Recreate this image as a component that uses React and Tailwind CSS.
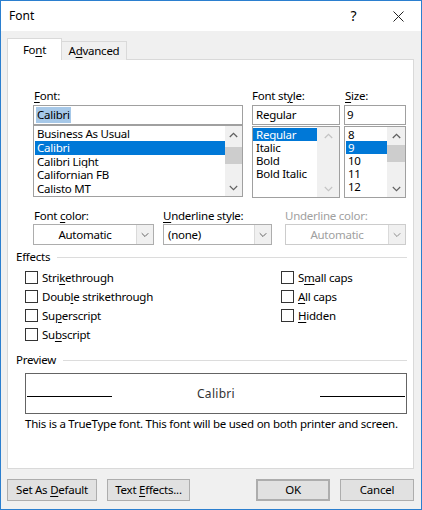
import React from 'react';

const K = ({ children }) => (
  <span className="underline decoration-1 underline-offset-[2px]">{children}</span>
);

const ChevUp = ({ color = '#606060' }) => (
  <svg width="9" height="6" viewBox="0 0 9 6">
    <path d="M0.8 5 L4.5 1.3 L8.2 5" fill="none" stroke={color} strokeWidth="1.3" />
  </svg>
);

const ChevDown = ({ color = '#606060', w = 9 }) => (
  <svg width={w} height="6" viewBox="0 0 9 6">
    <path d="M0.8 1 L4.5 4.7 L8.2 1" fill="none" stroke={color} strokeWidth="1.1" />
  </svg>
);

function ScrollBar({ className, thumbClass, disabled }) {
  const c = disabled ? '#c4c4c4' : '#606060';
  return (
    <div className={`flex flex-col shrink-0 bg-[#f0f0f0] ${className}`}>
      <div className="h-[17px] flex items-center justify-center">
        <ChevUp color={c} />
      </div>
      <div className="flex-1">
        {thumbClass && <div className={`bg-[#cdcdcd] h-[17px] ${thumbClass}`} />}
      </div>
      <div className="h-[17px] flex items-center justify-center">
        <ChevDown color={c} />
      </div>
    </div>
  );
}

function ListBox({ className, items, selected, rowClass, bandClass, scrollClass, thumbClass, disabled }) {
  return (
    <div className={`flex h-[72px] border border-[#a0a0a0] bg-white overflow-hidden ${className}`}>
      <div className={`flex flex-col pt-[1px] ${bandClass}`}>
        {items.map((it) => (
          <div
            key={it}
            className={`${rowClass} flex items-center whitespace-nowrap overflow-hidden ${
              it === selected ? 'bg-[#0078d7] text-white' : ''
            }`}
          >
            <span>{it}</span>
          </div>
        ))}
      </div>
      <ScrollBar className={scrollClass} thumbClass={thumbClass} disabled={disabled} />
    </div>
  );
}

function Combo({ className, text, left, disabled }) {
  return (
    <div
      className={`flex h-[21px] border bg-white ${
        disabled ? 'border-[#cccccc] text-[#a0a0a0]' : 'border-[#adadad]'
      } ${className}`}
    >
      <div className={`flex-1 flex items-center ${left ? 'pl-[4px]' : 'justify-center'}`}>
        <span>{text}</span>
      </div>
      <div className="w-[17px] flex items-center justify-center bg-[#f0f0f0] border-l border-[#dadada]">
        <ChevDown color={disabled ? '#8a8a8a' : '#606060'} w={8} />
      </div>
    </div>
  );
}

function Check({ children }) {
  return (
    <div className="flex items-center h-[19px]">
      <div className="w-[13px] h-[13px] border border-[#333333] bg-white" />
      <span className="ml-[4px]">{children}</span>
    </div>
  );
}

function Button({ className, children }) {
  return (
    <div
      className={`h-[22px] flex items-center justify-center bg-[#e1e1e1] border border-[#adadad] ${className}`}
    >
      <span>{children}</span>
    </div>
  );
}

export default function App() {
  return (
    <div className="w-[422px] h-[510px] bg-[#f0f0f0] border border-[#2b7fcf] flex flex-col text-[11.5px] tracking-[-0.25px] leading-[16px] text-black font-['Segoe_UI','Noto_Sans',sans-serif]">
      {/* title bar */}
      <div className="h-[30px] bg-white flex items-center shrink-0 text-[12px] tracking-normal">
        <span className="flex-1 pl-[8px]">Font</span>
        <div className="w-[46px] h-full flex items-center justify-center pl-[3px] text-[14px]">?</div>
        <div className="w-[46px] h-full flex items-center justify-center">
          <svg width="11" height="11" viewBox="0 0 11 11">
            <path d="M0.5 0.5 L10.5 10.5 M10.5 0.5 L0.5 10.5" stroke="#222" strokeWidth="1" />
          </svg>
        </div>
      </div>

      <div className="flex-1 flex flex-col pl-[6px] pr-[7px] pt-[7px]">
        {/* tabs */}
        <div className="flex items-end h-[22px] relative z-10 -mb-px">
          <div className="w-[55px] h-[22px] bg-white border border-b-0 border-[#d9d9d9] flex items-center justify-center">
            <span>Fo<K>n</K>t</span>
          </div>
          <div className="w-[65px] h-[19px] bg-[#f0f0f0] border border-l-0 border-b-0 border-[#d9d9d9] flex items-center justify-center">
            <span>A<K>d</K>vanced</span>
          </div>
        </div>

        {/* panel */}
        <div className="h-[410px] bg-white border border-[#d9d9d9] pr-[6px] pt-[28px] flex flex-col">
          {/* row 1 */}
          <div className="flex pl-[25px]">
            <div className="flex flex-col w-[210px]">
              <div className="h-[16px] pl-[1px]"><K>F</K>ont:</div>
              <div className="mt-[1px] h-[20px] border border-[#a0a0a0] flex items-center pl-[2px]">
                <span className="bg-[#a6c8e8] px-[1px]">Calibri</span>
              </div>
              <ListBox
                items={['Business As Usual', 'Calibri', 'Calibri Light', 'Californian FB', 'Calisto MT']}
                selected="Calibri"
                rowClass="h-[14px] leading-[14px] pl-[2px]"
                bandClass="flex-1 pl-[1px]"
                scrollClass="w-[17px]"
                thumbClass="mt-[4px]"
              />
            </div>
            <div className="flex flex-col w-[88px] ml-[9px]">
              <div className="h-[16px]">Font st<K>y</K>le:</div>
              <div className="mt-[1px] h-[20px] border border-[#a0a0a0] flex items-center pl-[3px]">Regular</div>
              <ListBox
                className="mt-[1px] h-[71px]"
                items={['Regular', 'Italic', 'Bold', 'Bold Italic']}
                selected="Regular"
                rowClass="h-[13px] leading-[13px] pl-[3px]"
                bandClass="w-[64px]"
                scrollClass="w-[22px]"
                disabled
              />
            </div>
            <div className="flex flex-col w-[62px] ml-[4px]">
              <div className="h-[16px] pl-[1px]"><K>S</K>ize:</div>
              <div className="mt-[1px] h-[20px] border border-[#a0a0a0] flex items-center pl-[2px]">9</div>
              <ListBox
                className="mt-[1px] h-[71px]"
                items={['8', '9', '10', '11', '12']}
                selected="9"
                rowClass="h-[13px] leading-[13px] pl-[2px]"
                bandClass="flex-1 pl-[1px]"
                scrollClass="w-[18px]"
                thumbClass="mt-[1px]"
              />
            </div>
          </div>

          {/* row 2 */}
          <div className="flex pl-[25px] mt-[10px]">
            <div className="flex flex-col w-[121px]">
              <div className="h-[16px] pl-[1px]">Font <K>c</K>olor:</div>
              <Combo text="Automatic" />
            </div>
            <div className="flex flex-col w-[109px] ml-[9px]">
              <div className="h-[16px]"><K>U</K>nderline style:</div>
              <Combo text="(none)" left />
            </div>
            <div className="flex flex-col w-[121px] ml-[13px]">
              <div className="h-[16px] text-[#a0a0a0]">Underline color:</div>
              <Combo text="Automatic" disabled />
            </div>
          </div>

          {/* effects */}
          <div className="flex items-center mt-[4px] pl-[8px]">
            <span>Effects</span>
            <div className="flex-1 h-px bg-[#dcdcdc] ml-[7px]" />
          </div>
          <div className="flex pl-[17px] mt-[3px]">
            <div className="w-[256px] flex flex-col">
              <Check>Stri<K>k</K>ethrough</Check>
              <Check>Doub<K>l</K>e strikethrough</Check>
              <Check>Su<K>p</K>erscript</Check>
              <Check>Su<K>b</K>script</Check>
            </div>
            <div className="flex flex-col">
              <Check>S<K>m</K>all caps</Check>
              <Check><K>A</K>ll caps</Check>
              <Check><K>H</K>idden</Check>
            </div>
          </div>

          {/* preview */}
          <div className="flex items-center mt-[8px] pl-[8px]">
            <span>Preview</span>
            <div className="flex-1 h-px bg-[#dcdcdc] ml-[7px]" />
          </div>
          <div className="ml-[17px] mt-[5px] h-[41px] border border-[#646464] flex items-center">
            <div className="w-[85px] ml-[1px] h-px bg-black mt-[6px]" />
            <div className="flex-1 text-center text-[#333333] text-[12px] tracking-[0.3px]">Calibri</div>
            <div className="w-[85px] mr-[1px] h-px bg-black mt-[6px]" />
          </div>
          <div className="ml-[17px] mt-[2px] whitespace-nowrap">
            This is a TrueType font. This font will be used on both printer and screen.
          </div>
        </div>

        {/* buttons */}
        <div className="flex mt-[10px]">
          <Button className="w-[90px]">Set As <K>D</K>efault</Button>
          <Button className="w-[83px] ml-[10px]">Text <K>E</K>ffects...</Button>
          <Button className="w-[74px] ml-auto border-2 border-[#0078d7]">OK</Button>
          <Button className="w-[74px] ml-[10px]">Cancel</Button>
        </div>
      </div>
    </div>
  );
}
